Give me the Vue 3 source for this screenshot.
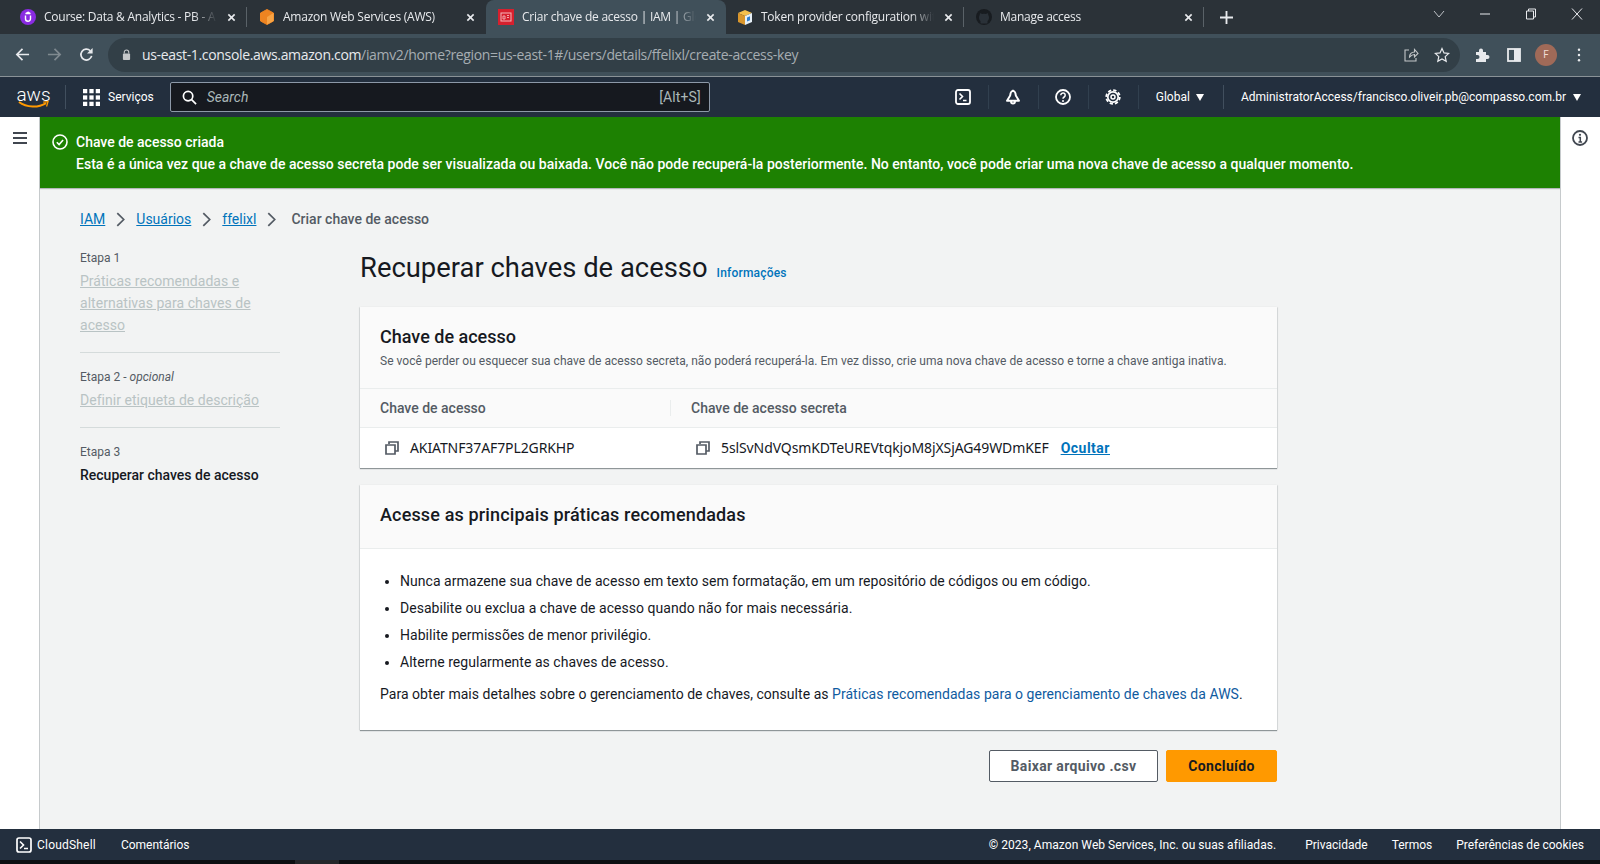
<script setup>
const tabs = [
  { title: "Course: Data & Analytics - PB - A", icon: "udemy", width: 238 },
  { title: "Amazon Web Services (AWS)", icon: "aws", width: 239 },
  { title: "Criar chave de acesso | IAM | Glo", icon: "iam", width: 240, active: true },
  { title: "Token provider configuration wit", icon: "box", width: 238 },
  { title: "Manage access", icon: "github", width: 240 },
];

const practices = [
  "Nunca armazene sua chave de acesso em texto sem formatação, em um repositório de códigos ou em código.",
  "Desabilite ou exclua a chave de acesso quando não for mais necessária.",
  "Habilite permissões de menor privilégio.",
  "Alterne regularmente as chaves de acesso.",
];
</script>

<template>
  <div class="page">
    <div class="tabstrip">
      <div
        v-for="tab in tabs"
        :key="tab.title"
        class="tab"
        :class="{ active: tab.active }"
        :style="{ width: tab.width + 'px' }"
      >
        <svg class="favicon" viewBox="0 0 16 16">
          <template v-if="tab.icon === 'udemy'">
            <circle cx="8" cy="8" r="8" fill="#8a2be2" />
            <path d="M5.5 6.5v3.2a2.5 2.5 0 0 0 5 0V6.5M8 3.2l2.4 1.3H5.6z" fill="none" stroke="#fff" stroke-width="1.4" />
          </template>
          <template v-else-if="tab.icon === 'aws'">
            <path d="M8 .5l6.5 3.5v8L8 15.500 1.500 12V4z" fill="#ee8421" stroke="#ee8421" stroke-linejoin="round" />
            <path d="M8 8l6.500-4v8L8 15.500z" fill="#f8a445" />
          </template>
          <template v-else-if="tab.icon === 'iam'">
            <rect width="16" height="16" fill="#d6202e" />
            <rect x="3" y="4" width="10" height="8" fill="none" stroke="#f5b5ba" stroke-width="1" />
            <path d="M5 7h2v3H5zM9 6.500h2M9 8.500h2" fill="none" stroke="#f5b5ba" stroke-width="0.9" />
          </template>
          <template v-else-if="tab.icon === 'box'">
            <path d="M1 4l7-3 7 3-7 3z" fill="#f4c04e" />
            <path d="M1 4l7 3v9l-7-3z" fill="#d9962c" />
            <path d="M15 4l-7 3v9l7-3z" fill="#e7f0f7" />
            <path d="M10 8.500l3-1.200v4l-3 1.200z" fill="#2f7fd0" />
          </template>
          <circle v-else cx="8" cy="8" r="8" fill="#181c20" />
          <path
            v-if="tab.icon === 'github'"
            d="M4.500 14.500v-2.500c-.8-.6-1.500-1.700-1.500-3.500 0-1 .3-1.800.8-2.400-.1-.7 0-1.400.2-1.800.8 0 1.500.4 2 .8a7 7 0 0 1 4 0c.5-.4 1.200-.8 2-.8.2.4.3 1.100.2 1.800.5.600.8 1.400.8 2.400 0 1.800-.7 2.900-1.500 3.500v2.500z"
            fill="#2a3138"
          />
        </svg>
        <span class="tab-title">{{ tab.title }}</span>
        <svg class="tab-close" viewBox="0 0 10 10"><path d="M1.500 1.500l7 7M8.500 1.500l-7 7" stroke="#e8eaed" stroke-width="1.800" /></svg>
      </div>
      <svg class="new-tab" viewBox="0 0 14 14"><path d="M7 0v14M0 7h14" stroke="#e8eaed" stroke-width="2" /></svg>
      <div class="window-controls">
        <svg viewBox="0 0 12 12" class="chev"><path d="M1 3l5 6 5-6" fill="none" stroke="#bdc1c6" /></svg>
        <svg viewBox="0 0 12 12"><path d="M1 6h10" stroke="#e8eaed" /></svg>
        <svg viewBox="0 0 12 12"><path d="M3.500 3V1h7v8H8.500M1.500 3h7v8h-7z" fill="none" stroke="#e8eaed" /></svg>
        <svg viewBox="0 0 12 12"><path d="M1 .5l10 11M11 .5l-10 11" stroke="#e8eaed" /></svg>
      </div>
    </div>

    <div class="toolbar">
      <svg class="tool" viewBox="0 0 16 16"><path d="M15 8H2M8 2L2 8l6 6" fill="none" stroke="#e8eaed" stroke-width="1.800" /></svg>
      <svg class="tool" viewBox="0 0 16 16"><path d="M1 8h13M8 2l6 6-6 6" fill="none" stroke="#7f8a90" stroke-width="1.800" /></svg>
      <svg class="tool" viewBox="0 0 16 16"><path d="M13.500 9.500A5.800 5.800 0 1 1 12 4" fill="none" stroke="#e8eaed" stroke-width="1.800" /><path d="M14.500 1v6h-6z" fill="#e8eaed" /></svg>
      <div class="omnibox">
        <svg class="lock" viewBox="0 0 10 12"><path d="M2.500 5V3.500a2.500 2.500 0 0 1 5 0V5" fill="none" stroke="#c4c7c9" stroke-width="1.200" /><rect x="1" y="5" width="8" height="7" rx="1" fill="#c4c7c9" /></svg>
        <span class="url"><b>us-east-1.console.aws.amazon.com</b>/iamv2/home?region=us-east-1#/users/details/ffelixl/create-access-key</span>
        <svg class="omni-icon" viewBox="0 0 16 16"><path d="M6 3H2v11h11v-3M6.500 10c0-3 2-5 5-5V2.500L15 6.500l-3.500 3.500V7.500c-2 0-3.500 1-5 2.500z" fill="none" stroke="#c4c7c9" stroke-width="1.100" /></svg>
        <svg class="omni-icon" viewBox="0 0 16 16"><path d="M8 1.500l2 4.400 4.700.5-3.500 3.200 1 4.700L8 11.900l-4.200 2.400 1-4.700L1.300 6.400 6 5.900z" fill="none" stroke="#e8eaed" stroke-width="1.200" /></svg>
      </div>
      <div class="tool-right">
        <svg class="ext" viewBox="0 0 16 16"><path d="M2 5h3V3.500a2 2 0 0 1 4 0V5h3v3h1.500a2 2 0 0 1 0 4H12v3H2v-3h1.500a2 2 0 0 0 0-4H2z" fill="#e8eaed" /></svg>
        <svg class="ext" viewBox="0 0 16 16"><rect x="2" y="2" width="12" height="12" fill="none" stroke="#e8eaed" stroke-width="1.800" /><rect x="8" y="2" width="6" height="12" fill="#e8eaed" /></svg>
        <span class="avatar">F</span>
        <svg class="dots" viewBox="0 0 4 16"><circle cx="2" cy="2" r="1.400" fill="#e8eaed" /><circle cx="2" cy="8" r="1.400" fill="#e8eaed" /><circle cx="2" cy="14" r="1.400" fill="#e8eaed" /></svg>
      </div>
    </div>

    <nav class="awsnav">
      <div class="aws-logo">
        <span class="aws-word">aws</span>
        <svg viewBox="0 0 32 8"><path d="M1 1c8 6 20 6 28 1" fill="none" stroke="#ff9900" stroke-width="2" /><path d="M26 1l5-.5-1.500 5" fill="none" stroke="#ff9900" stroke-width="1.300" /></svg>
      </div>
      <div class="services">
        <svg viewBox="0 0 16 16" class="grid-icon">
          <g fill="#fff">
            <rect x="0" y="0" width="4" height="4" /><rect x="6" y="0" width="4" height="4" /><rect x="12" y="0" width="4" height="4" />
            <rect x="0" y="6" width="4" height="4" /><rect x="6" y="6" width="4" height="4" /><rect x="12" y="6" width="4" height="4" />
            <rect x="0" y="12" width="4" height="4" /><rect x="6" y="12" width="4" height="4" /><rect x="12" y="12" width="4" height="4" />
          </g>
        </svg>
        <span>Serviços</span>
      </div>
      <div class="search">
        <svg viewBox="0 0 16 16" class="search-icon"><circle cx="6.500" cy="6.500" r="5" fill="none" stroke="#fff" stroke-width="1.800" /><path d="M10 10l5 5" stroke="#fff" stroke-width="1.800" /></svg>
        <em>Search</em>
        <span class="shortcut">[Alt+S]</span>
      </div>
      <div class="nav-right">
        <span class="nav-icon"><svg viewBox="0 0 16 16"><rect x="1" y="1" width="14" height="14" rx="2" fill="none" stroke="#fff" stroke-width="1.800" /><path d="M4.500 4.500L7.500 7.500 4.500 10.500M8 11.500h3.500" fill="none" stroke="#fff" stroke-width="1.600" /></svg></span>
        <span class="nav-icon"><svg viewBox="0 0 16 16"><path d="M8 1.500c-2 1-2.800 2.800-2.800 5L2 11.800h12l-3.200-5.300c0-2.200-.8-4-2.800-5zM6 12.500a2 2 0 0 0 4 0" fill="none" stroke="#fff" stroke-width="1.900" stroke-linejoin="round" /></svg></span>
        <span class="nav-icon"><svg viewBox="0 0 16 16"><circle cx="8" cy="8" r="7" fill="none" stroke="#fff" stroke-width="1.800" /><path d="M5.800 6.200a2.200 2.200 0 1 1 3.400 1.800c-.8.5-1.200 1-1.200 1.800" fill="none" stroke="#fff" stroke-width="1.500" /><circle cx="8" cy="12" r="1" fill="#fff" /></svg></span>
        <span class="nav-icon"><svg viewBox="0 0 16 16"><circle cx="8" cy="8" r="5.200" fill="none" stroke="#fff" stroke-width="1.700" /><circle cx="8" cy="8" r="6.800" fill="none" stroke="#fff" stroke-width="1.800" stroke-dasharray="3.300 2.040" /><circle cx="8" cy="8" r="2" fill="none" stroke="#fff" stroke-width="1.500" /></svg></span>
        <span class="nav-menu region">Global <i class="caret"></i></span>
        <span class="nav-menu account">AdministratorAccess/francisco.oliveir.pb@compasso.com.br <i class="caret"></i></span>
      </div>
    </nav>

    <div class="workspace">
      <aside class="rail">
        <svg viewBox="0 0 14 12" class="burger"><path d="M0 1h14M0 6h14M0 11h14" stroke="#414750" stroke-width="2" /></svg>
      </aside>

      <div class="center">
        <div class="flash">
          <svg viewBox="0 0 16 16" class="flash-icon"><circle cx="8" cy="8" r="7" fill="none" stroke="#fff" stroke-width="1.600" /><path d="M4.800 8.200l2.300 2.300 4-4.500" fill="none" stroke="#fff" stroke-width="1.600" /></svg>
          <div>
            <div class="flash-title">Chave de acesso criada</div>
            <div class="flash-text">Esta é a única vez que a chave de acesso secreta pode ser visualizada ou baixada. Você não pode recuperá-la posteriormente. No entanto, você pode criar uma nova chave de acesso a qualquer momento.</div>
          </div>
        </div>

        <div class="content">
          <div class="crumbs">
            <a>IAM</a><svg viewBox="0 0 8 14"><path d="M1 1l6 6-6 6" fill="none" stroke="#545b64" stroke-width="1.600" /></svg>
            <a>Usuários</a><svg viewBox="0 0 8 14"><path d="M1 1l6 6-6 6" fill="none" stroke="#545b64" stroke-width="1.600" /></svg>
            <a>ffelixl</a><svg viewBox="0 0 8 14"><path d="M1 1l6 6-6 6" fill="none" stroke="#545b64" stroke-width="1.600" /></svg>
            <span>Criar chave de acesso</span>
          </div>

          <div class="wizard">
            <ol class="steps">
              <li>
                <small>Etapa 1</small>
                <a class="disabled">Práticas recomendadas e alternativas para chaves de acesso</a>
              </li>
              <li>
                <small>Etapa 2 - <em>opcional</em></small>
                <a class="disabled">Definir etiqueta de descrição</a>
              </li>
              <li>
                <small>Etapa 3</small>
                <strong>Recuperar chaves de acesso</strong>
              </li>
            </ol>

            <main class="main">
              <div class="title-row">
                <h1>Recuperar chaves de acesso</h1>
                <a>Informações</a>
              </div>

              <section class="card key-card">
                <header>
                  <h2>Chave de acesso</h2>
                  <p>Se você perder ou esquecer sua chave de acesso secreta, não poderá recuperá-la. Em vez disso, crie uma nova chave de acesso e torne a chave antiga inativa.</p>
                </header>
                <div class="thead">
                  <div>Chave de acesso</div>
                  <div class="th-second">Chave de acesso secreta</div>
                </div>
                <div class="trow">
                  <div class="cell">
                    <svg viewBox="0 0 14 14" class="copy"><path d="M4 3V1h9v9h-2.500M1 4h9v9H1z" fill="none" stroke="#545b64" stroke-width="1.700" /></svg>
                    <span>AKIATNF37AF7PL2GRKHP</span>
                  </div>
                  <div class="cell cell-second">
                    <svg viewBox="0 0 14 14" class="copy"><path d="M4 3V1h9v9h-2.500M1 4h9v9H1z" fill="none" stroke="#545b64" stroke-width="1.700" /></svg>
                    <span>5slSvNdVQsmKDTeUREVtqkjoM8jXSjAG49WDmKEF</span>
                    <a>Ocultar</a>
                  </div>
                </div>
              </section>

              <section class="card tips-card">
                <header><h2>Acesse as principais práticas recomendadas</h2></header>
                <div class="tips">
                  <ul>
                    <li v-for="item in practices" :key="item">{{ item }}</li>
                  </ul>
                  <p>Para obter mais detalhes sobre o gerenciamento de chaves, consulte as <a>Práticas recomendadas para o gerenciamento de chaves da AWS</a>.</p>
                </div>
              </section>

              <div class="actions">
                <button class="btn-normal">Baixar arquivo .csv</button>
                <button class="btn-primary">Concluído</button>
              </div>
            </main>
          </div>
        </div>
      </div>

      <aside class="rail rail-right">
        <svg viewBox="0 0 16 16" class="info"><circle cx="8" cy="8" r="7" fill="none" stroke="#414750" stroke-width="1.800" /><path d="M6.500 7.500H8.300V12M6.500 12h3.600" fill="none" stroke="#414750" stroke-width="1.500" /><circle cx="8" cy="4.800" r="1.100" fill="#414750" /></svg>
      </aside>
    </div>

    <footer class="footer">
      <svg viewBox="0 0 16 16"><rect x="1" y="1" width="14" height="14" rx="2" fill="none" stroke="#fff" stroke-width="1.700" /><path d="M4 4.500L7.500 8 4 11.500M8 11.500h4" fill="none" stroke="#fff" stroke-width="1.600" /></svg>
      <span class="cloudshell">CloudShell</span>
      <span>Comentários</span>
      <div class="footer-right">
        <span class="copyright">© 2023, Amazon Web Services, Inc. ou suas afiliadas.</span>
        <span>Privacidade</span>
        <span>Termos</span>
        <span>Preferências de cookies</span>
      </div>
    </footer>
    <div class="taskbar"><span></span></div>
  </div>
</template>

<style>
html, body {
  margin: 0;
  overflow: hidden;
}
</style>

<style scoped>
.page {
  width: 1600px;
  height: 864px;
  display: flex;
  flex-direction: column;
  overflow: hidden;
  font-family: Roboto, "Noto Sans", sans-serif;
  font-size: 14px;
  color: #16191f;
  background: #fff;
}

/* browser chrome */
.tabstrip {
  height: 34px;
  flex: none;
  display: flex;
  align-items: center;
  padding-left: 9px;
  background: #2b3238;
  color: #e8eaed;
  font-family: "Open Sans", sans-serif;
  font-size: 12px;
  letter-spacing: -0.24px;
}
.tab {
  height: 34px;
  box-sizing: border-box;
  flex: none;
  display: flex;
  align-items: center;
  padding: 0 11px;
  gap: 8px;
  position: relative;
}
.tab:nth-child(2),
.tab:nth-child(3),
.tab:nth-child(5) {
  padding-left: 12px;
}
.tab::after {
  content: "";
  position: absolute;
  right: 0;
  top: 7px;
  bottom: 7px;
  width: 1px;
  background: #5a6268;
}
.tab:nth-child(2)::after,
.tab.active::after {
  display: none;
}
.tab.active {
  background: #40505a;
  border-radius: 8px 8px 0 0;
}
.favicon {
  width: 16px;
  height: 16px;
  flex: none;
}
.tab-title {
  flex: 1;
  min-width: 0;
  white-space: nowrap;
  overflow: hidden;
  padding-bottom: 2px;
  -webkit-mask-image: linear-gradient(90deg, #000 calc(100% - 26px), transparent calc(100% - 2px));
  mask-image: linear-gradient(90deg, #000 calc(100% - 26px), transparent calc(100% - 2px));
}
.tab-close {
  width: 9px;
  height: 9px;
  flex: none;
}
.new-tab {
  width: 13px;
  height: 13px;
  margin-left: 16px;
}
.window-controls {
  margin-left: auto;
  display: flex;
  align-items: center;
  gap: 34px;
  padding: 0 17px 6px 0;
}
.window-controls svg {
  width: 12px;
  height: 12px;
}
.toolbar {
  height: 41px;
  flex: none;
  display: flex;
  align-items: center;
  box-sizing: content-box;
  padding-bottom: 1px;
  border-bottom: 1px solid #8a9297;
  background: #40505a;
  padding-left: 15px;
}
.tool {
  width: 15px;
  height: 15px;
  margin-right: 17px;
}
.omnibox {
  width: 1352px;
  height: 34px;
  margin-left: -3px;
  flex: none;
  box-sizing: border-box;
  display: flex;
  align-items: center;
  padding: 0 10px 0 14px;
  border-radius: 17px;
  background: #323f47;
  color: #a6adb2;
  font-family: "Open Sans", sans-serif;
  font-size: 14px;
  letter-spacing: -0.34px;
}
.lock {
  width: 9px;
  height: 11px;
  margin-right: 11px;
}
.url b {
  font-weight: 400;
  color: #e8eaed;
}
.omni-icon {
  width: 16px;
  height: 16px;
  margin-left: 15px;
}
.url + .omni-icon {
  margin-left: auto;
}
.tool-right {
  display: flex;
  align-items: center;
  padding-left: 14px;
}
.ext {
  width: 16px;
  height: 16px;
  margin-right: 16px;
}
.ext + .avatar {
  margin-left: -3px;
}
.avatar {
  width: 22px;
  height: 22px;
  border-radius: 50%;
  background: #a06a58;
  color: #f0dcd4;
  font-size: 10px;
  display: flex;
  align-items: center;
  justify-content: center;
}
.dots {
  width: 4px;
  height: 14px;
  margin-left: 20px;
}

/* aws nav */
.awsnav {
  height: 40px;
  flex: none;
  display: flex;
  align-items: center;
  background: #232f3e;
  color: #fff;
  padding-left: 18px;
  font-size: 12px;
}
.aws-logo {
  width: 31px;
  display: flex;
  flex-direction: column;
  align-items: center;
}
.aws-logo svg {
  width: 31px;
  height: 8px;
  margin-top: -3px;
}
.aws-word {
  font-size: 19px;
  font-weight: 300;
  line-height: 18px;
}
.services {
  display: flex;
  align-items: center;
  gap: 8px;
  height: 24px;
  margin-left: 16px;
  padding-left: 17px;
  border-left: 1px solid #414f5e;
}
.grid-icon {
  width: 17px;
  height: 17px;
}
.search {
  width: 540px;
  height: 30px;
  margin-left: 16px;
  box-sizing: border-box;
  display: flex;
  align-items: center;
  padding: 0 8px 0 11px;
  border: 1px solid #8d99a8;
  border-radius: 2px;
  background: #16191f;
  color: #aab7b8;
  font-size: 14px;
}
.search-icon {
  width: 15px;
  height: 15px;
  margin-right: 10px;
}
.shortcut {
  margin-left: auto;
  letter-spacing: 0.1px;
}
.nav-right {
  flex: 1;
  display: flex;
  align-items: center;
  justify-content: flex-end;
  padding-right: 19px;
}
.nav-icon {
  width: 50px;
  height: 24px;
  box-sizing: border-box;
  display: flex;
  align-items: center;
  justify-content: center;
  border-right: 1px solid #31404f;
}
.nav-icon svg {
  width: 16px;
  height: 16px;
}
.nav-menu {
  display: flex;
  align-items: center;
  gap: 6px;
}
.region {
  height: 24px;
  padding: 0 19px 0 17px;
  border-right: 1px solid #414f5e;
}
.account {
  margin-left: 17px;
  gap: 7px;
}
.caret {
  width: 0;
  height: 0;
  border-left: 4.500px solid transparent;
  border-right: 4.500px solid transparent;
  border-top: 7px solid #fff;
}

/* page body */
.workspace {
  flex: 1;
  min-height: 0;
  display: flex;
}
.rail {
  width: 40px;
  flex: none;
  box-sizing: border-box;
  display: flex;
  justify-content: center;
  padding-top: 15px;
  background: #fff;
  box-shadow: inset -1px 0 0 #c6cacc;
}
.rail-right {
  box-shadow: inset 1px 0 0 #c6cacc;
  padding-top: 13px;
}
.burger {
  width: 14px;
  height: 12px;
}
.info {
  width: 16px;
  height: 16px;
}
.center {
  flex: 1;
  min-width: 0;
  background: #f2f3f3;
  display: flex;
  flex-direction: column;
}
.flash {
  height: 71px;
  flex: none;
  box-sizing: border-box;
  display: flex;
  gap: 8px;
  padding: 14px 12px 0 12px;
  background: #1d8102;
  color: #fff;
  box-shadow: 0 1px 1px #b4b8ba;
}
.flash-icon {
  width: 16px;
  height: 16px;
  margin-top: 3px;
}
.flash-title,
.flash-text {
  line-height: 22px;
  font-weight: 500;
  font-size: 14px;
}
.flash-text {
  letter-spacing: 0.025px;
}
.content {
  padding: 20px 40px 0;
}
.crumbs {
  display: flex;
  align-items: center;
  height: 22px;
  font-size: 14px;
  color: #545b64;
  font-weight: 500;
}
.crumbs a {
  color: #0073bb;
  font-weight: 400;
  text-decoration: underline;
}
.crumbs svg {
  width: 9px;
  height: 15px;
  margin: 0 11px;
}
.crumbs span {
  margin-left: 4px;
}
.wizard {
  display: flex;
  gap: 80px;
}
.steps {
  width: 200px;
  flex: none;
  margin: 0;
  padding: 17px 0 0;
  list-style: none;
}
.steps li {
  padding-bottom: 16px;
  margin-bottom: 13px;
  border-bottom: 1px solid #d5dbdb;
}
.steps li:last-child {
  border: 0;
}
.steps small {
  display: block;
  font-size: 12px;
  line-height: 22px;
  margin-bottom: 1px;
  color: #545b64;
}
.steps a,
.steps strong {
  display: block;
  line-height: 22px;
}
.disabled {
  color: #b9c3c4;
  text-decoration: underline;
  letter-spacing: 0.03px;
}
.steps strong {
  font-weight: 500;
}
.main {
  flex: 1;
  min-width: 0;
  padding-top: 20px;
  padding-right: 243px;
}
.title-row {
  display: flex;
  align-items: baseline;
  gap: 9px;
  height: 36px;
}
h1 {
  margin: 0;
  font-size: 27.400px;
  font-weight: 400;
  line-height: 36px;
}
.title-row a {
  font-size: 12px;
  font-weight: 500;
  letter-spacing: 0.2px;
  color: #0073bb;
}
.card {
  background: #fff;
  box-shadow: 0 1px 1px #8f9698, 1px 0 1px #e3e5e5, -1px 0 1px #e3e5e5;
}
.card header {
  background: #fafafa;
  padding: 0 20px;
}
.key-card {
  margin-top: 21px;
}
.key-card header {
  height: 81px;
  box-sizing: border-box;
  padding-top: 18px;
}
h2 {
  margin: 0;
  font-size: 18px;
  line-height: 24px;
  font-weight: 500;
}
.key-card p {
  margin: 1px 0 0;
  font-size: 12px;
  line-height: 22px;
  letter-spacing: 0.03px;
  color: #545b64;
}
.thead {
  height: 38px;
  box-sizing: content-box;
  display: flex;
  align-items: center;
  padding-left: 20px;
  background: #fafafa;
  border-top: 1px solid #eaeded;
  border-bottom: 1px solid #eaeded;
  color: #545b64;
  font-weight: 500;
}
.thead div:first-child {
  width: 290px;
}
.th-second {
  padding-left: 20px;
  border-left: 1px solid #eaeded;
}
.trow {
  height: 40px;
  display: flex;
  align-items: center;
  padding-left: 25px;
  color: #16191f;
}
.cell {
  display: flex;
  align-items: center;
  gap: 11px;
  font-family: "Noto Sans", sans-serif;
  letter-spacing: -0.1px;
}
.cell span {
  padding-bottom: 2px;
}
.cell:first-child {
  width: 311px;
}
.copy {
  width: 14px;
  height: 14px;
  flex: none;
}
.cell a {
  margin-left: 1px;
  color: #0073bb;
  font-family: Roboto, sans-serif;
  font-weight: 700;
  letter-spacing: 0.5px;
  text-decoration: underline;
}
.tips-card {
  margin-top: 17px;
}
.tips-card header {
  height: 64px;
  box-sizing: border-box;
  display: flex;
  align-items: center;
  padding-bottom: 3px;
  border-bottom: 1px solid #eaeded;
}
.tips-card h2 {
  letter-spacing: 0.15px;
}
.tips {
  padding: 19px 20px 0;
  height: 181px;
  box-sizing: border-box;
  letter-spacing: 0.035px;
}
.tips ul {
  margin: 0;
  padding-left: 20px;
}
.tips li {
  line-height: 27px;
}
.tips p {
  margin: 7px 0 0;
  line-height: 22px;
}
.tips a {
  color: #0f5b9f;
}
.actions {
  display: flex;
  justify-content: flex-end;
  gap: 8px;
  margin-top: 20px;
}
button {
  height: 32px;
  box-sizing: border-box;
  font-family: inherit;
  font-size: 14px;
  font-weight: 700;
  letter-spacing: 0.35px;
  border-radius: 2px;
  cursor: pointer;
}
.btn-normal {
  width: 169px;
  background: #fff;
  border: 1px solid #545b64;
  color: #545b64;
}
.btn-primary {
  width: 111px;
  background: #ff9900;
  border: 1px solid #ff9900;
  color: #16191f;
}

/* footer */
.footer {
  height: 31px;
  flex: none;
  box-sizing: border-box;
  display: flex;
  align-items: center;
  padding: 0 16px;
  background: #232f3e;
  color: #fff;
  font-size: 12px;
}
.footer svg {
  width: 16px;
  height: 16px;
  margin-right: 5px;
}
.cloudshell {
  margin-right: 25px;
  letter-spacing: 0.2px;
}
.footer-right {
  margin-left: auto;
  display: flex;
  gap: 24px;
}
.copyright {
  margin-right: 5px;
  letter-spacing: 0.05px;
}
.taskbar {
  height: 4px;
  flex: none;
  background: #0c0f12;
  padding-left: 295px;
}
.taskbar span {
  display: block;
  width: 44px;
  height: 4px;
  background: #24272a;
}
</style>
